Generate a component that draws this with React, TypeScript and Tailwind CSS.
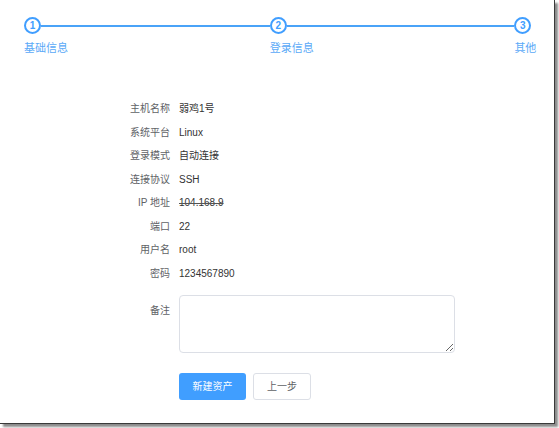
const STEPS = ['基础信息', '登录信息', '其他']

const FIELDS: { label: string; value: string; redacted?: boolean }[] = [
  { label: '主机名称', value: '弱鸡1号' },
  { label: '系统平台', value: 'Linux' },
  { label: '登录模式', value: '自动连接' },
  { label: '连接协议', value: 'SSH' },
  { label: 'IP 地址', value: '104.168.9', redacted: true },
  { label: '端口', value: '22' },
  { label: '用户名', value: 'root' },
  { label: '密码', value: '1234567890' },
]

function Steps() {
  return (
    <div className="flex pl-[24px] pt-[17px]">
      {STEPS.map((s, i) => {
        const last = i === STEPS.length - 1
        return (
          <div key={s} className={last ? 'w-[40px]' : i === 0 ? 'w-[248px]' : 'w-[247px]'}>
            <div className="flex items-center h-[17px]">
              <div className="w-[17px] h-[17px] shrink-0 rounded-full border-2 border-[#409eff] flex items-center justify-center text-[10px] font-bold text-[#409eff] leading-none">
                {i + 1}
              </div>
              {!last && <div className="flex-1 h-[2px] bg-[#4aa3f8]" />}
            </div>
            <div className="mt-[6px] text-[11px] leading-[16px] text-[#5aa9f7] whitespace-nowrap">{s}</div>
          </div>
        )
      })}
    </div>
  )
}

export default function App() {
  return (
    <div className="w-[559px] h-[428px] bg-white" style={{ fontFamily: '"Liberation Sans", "Noto Sans CJK SC", sans-serif' }}>
      <div className="w-[555px] h-[424px] bg-white border-r border-b border-[#3a3a3a] shadow-[3px_3px_2px_rgba(0,0,0,0.45)]">
        <Steps />

        <div className="mt-[41px] text-[10px]">
          {FIELDS.map((f) => (
            <div key={f.label} className="flex items-center h-[23.5px]">
              <div className="w-[170px] text-right text-[#606266]">{f.label}</div>
              <div className={'ml-[9px] text-[#333] ' + (f.redacted ? 'line-through decoration-[#555]' : '')}>
                {f.value}
              </div>
            </div>
          ))}

          <div className="flex mt-[10px]">
            <div className="w-[170px] text-right text-[#606266] pt-[8px]">备注</div>
            <textarea className="ml-[9px] w-[276px] h-[58px] border border-[#dcdfe6] rounded-[4px] outline-none px-2 py-1 text-[10px]" />
          </div>

          <div className="flex gap-[7px] ml-[179px] mt-[20px]">
            <button className="w-[67px] h-[27px] rounded-[3px] bg-[#409eff] text-white text-[10px]">新建资产</button>
            <button className="w-[58px] h-[27px] rounded-[3px] bg-white border border-[#dcdfe6] text-[#606266] text-[10px]">上一步</button>
          </div>
        </div>
      </div>
    </div>
  )
}
